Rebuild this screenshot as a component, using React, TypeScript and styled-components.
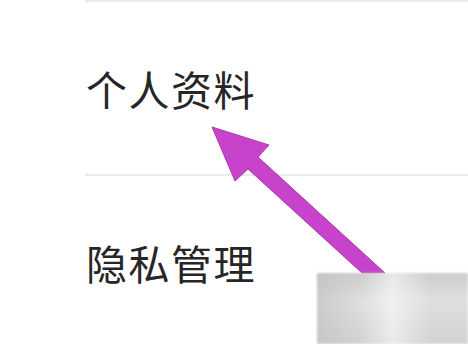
import React from "react";
import styled, { createGlobalStyle } from "styled-components";

const Global = createGlobalStyle`
  html, body { margin: 0; padding: 0; background: #ffffff; }
  body { font-family: "Noto Sans CJK SC", "Noto Sans", sans-serif; }
`;

const Page = styled.div`
  position: relative;
  width: 468px;
  height: 344px;
  overflow: hidden;
  background: #ffffff;
`;

const List = styled.div`
  margin-left: 85px;
  display: flex;
  flex-direction: column;
`;

const Divider = styled.div`
  height: 2px;
  background: #e9e9e9;
`;

const Item = styled.div`
  height: 172px;
  display: flex;
  align-items: center;
  padding-left: 1px;
  border-bottom: 2px solid #e9e9e9;
  font-size: 41px;
  letter-spacing: 1.5px;
  color: #262626;
  &:last-child { border-bottom: none; }
`;

const ArrowSvg = styled.svg`
  position: absolute;
  left: 0;
  top: 0;
  pointer-events: none;
`;

const Watermark = styled.div`
  position: absolute;
  left: 317px;
  top: 273px;
  width: 151px;
  height: 71px;
  background:
    linear-gradient(90deg, rgba(190,190,190,0.6) 0%, rgba(255,255,255,0) 30%, rgba(255,255,255,0.55) 50%, rgba(255,255,255,0) 75%),
    linear-gradient(180deg, #cdcdcd 0%, #e0e0e0 40%, #d2d2d2 100%);
  filter: blur(1px);
`;

export default function App() {
  return (
    <Page>
      <Global />
      <List>
        <Divider />
        <Item>个人资料</Item>
        <Item>隐私管理</Item>
      </List>
      <ArrowSvg width="468" height="344" viewBox="0 0 468 344">
        <polygon
          points="212,127 269,145 258,157 385,273 362,273 248,169 235,181"
          fill="#c843cc"
          stroke="#a83aa8"
          strokeWidth="1"
          strokeLinejoin="round"
        />
      </ArrowSvg>
      <Watermark />
    </Page>
  );
}
